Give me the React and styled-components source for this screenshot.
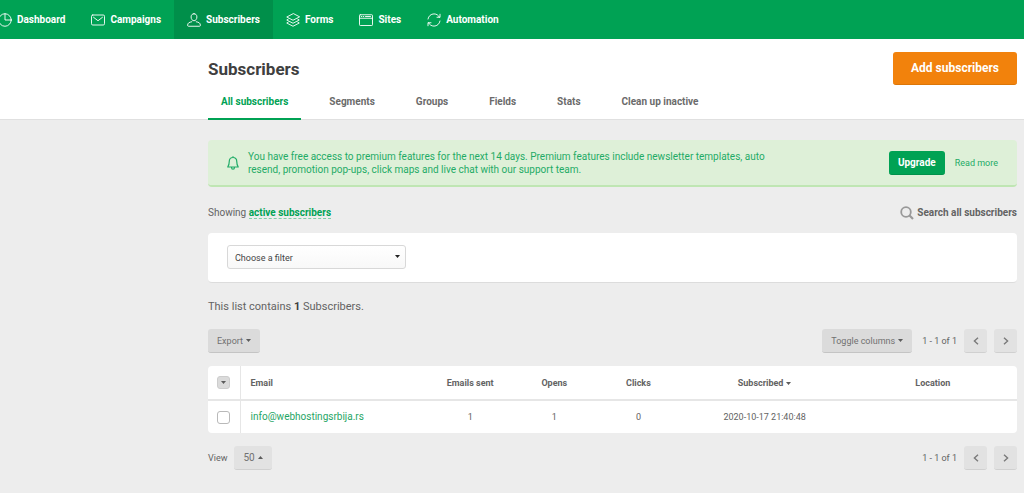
import React from 'react'
import styled, { createGlobalStyle } from 'styled-components'

const GlobalStyle = createGlobalStyle`
  * {
    box-sizing: border-box;
  }
  body {
    margin: 0;
    background: #ededed;
    color: #636363;
    font-family: Roboto, "Liberation Sans", sans-serif;
    font-size: 10px;
    line-height: 14px;
    overflow-x: hidden;
  }
  button, input, select {
    font-family: inherit;
    font-size: inherit;
    line-height: inherit;
    color: inherit;
    margin: 0;
  }
  a {
    text-decoration: none;
    color: inherit;
  }
`;

const Navbar = styled.nav`
  height: 39px;
  background: #00a254;
  overflow: hidden;
`;

const NavList = styled.ul`
  display: flex;
  list-style: none;
  height: 100%;
  margin: 0 0 0 -15px;
  padding: 0;
`;

const NavLink = styled.a`
  display: flex;
  align-items: center;
  gap: 5px;
  height: 100%;
  padding: 0 13px;
  background: ${(props) => (props.$active ? '#008f4a' : 'transparent')};
  color: white;
  font-weight: bold;
  white-space: nowrap;

  svg {
    width: 14px;
    height: 14px;
    flex: none;
  }
`;

const Header = styled.header`
  background: white;
  border-bottom: 1px solid #e0e0e0;
  padding: 13px 7px 0 208px;
`;

const TitleRow = styled.div`
  display: flex;
  align-items: center;
  justify-content: space-between;
`;

const Title = styled.h1`
  margin: 0;
  color: #3f3f3f;
  font-size: 17px;
  line-height: 22px;
  font-weight: bold;
`;

const AddButton = styled.button`
  height: 33px;
  padding: 0 18px;
  border: none;
  border-bottom: 1px solid #dc7608;
  border-radius: 3px;
  background: #f2820c;
  color: white;
  font-size: 12px;
  font-weight: bold;
  cursor: pointer;
`;

const Tabs = styled.div`
  display: flex;
  gap: 15px;
  margin-bottom: -1px;
`;

const Tab = styled.a`
  padding: 10px 13px 9px;
  border-bottom: 2px solid ${(props) => (props.$active ? '#00a254' : 'transparent')};
  color: ${(props) => (props.$active ? '#00a254' : '#6b6b6b')};
  font-weight: bold;
  white-space: nowrap;
`;

const Main = styled.main`
  padding: 20px 7px 22px 208px;
`;

const Notice = styled.div`
  display: flex;
  align-items: center;
  padding: 10px 19px 9px;
  border-bottom: 2px solid #bfe6b3;
  border-radius: 4px;
  background: #def0d8;
  color: #1fab66;
`;

const NoticeText = styled.p`
  flex: 1;
  max-width: 550px;
  margin: 0 auto 0 9px;
  line-height: 13px;
`;

const UpgradeButton = styled.button`
  height: 24px;
  margin-right: 10px;
  padding: 0 9px;
  border: none;
  border-bottom: 1px solid #00914b;
  border-radius: 3px;
  background: #00a254;
  color: white;
  font-weight: bold;
  cursor: pointer;
`;

const ReadMore = styled.a`
  font-size: 9px;
`;

const Bar = styled.div`
  display: flex;
  align-items: center;
  justify-content: space-between;
`;

const ShowingBar = styled(Bar)`
  margin: 19px 0 13px;
`;

const ActiveFilter = styled.a`
  border-bottom: 1px dashed #7fcfa6;
  color: #00a254;
  font-weight: bold;
`;

const SearchButton = styled.button`
  display: flex;
  align-items: center;
  gap: 3px;
  padding: 0;
  border: none;
  background: none;
  font-weight: bold;
  cursor: pointer;
`;

const FilterPanel = styled.div`
  padding: 12px 19px 13px;
  border-bottom: 1px solid #dcdcdc;
  border-radius: 4px;
  background: white;
`;

const SelectBox = styled.div`
  position: relative;
  width: 179px;

  svg {
    position: absolute;
    right: 6px;
    top: 10px;
    pointer-events: none;
  }
`;

const Select = styled.select`
  display: block;
  width: 100%;
  height: 24px;
  padding: 2px 20px 0 7px;
  border: 1px solid #d8d8d8;
  border-radius: 3px;
  background: linear-gradient(#ffffff, #f8f8f8);
  color: #444;
  font-size: 9px;
  appearance: none;
`;

const Summary = styled.p`
  margin: 17px 0 15px;
  font-size: 11px;

  strong {
    color: #3f3f3f;
    font-weight: bold;
  }
`;

const GreyButton = styled.button`
  display: flex;
  align-items: center;
  justify-content: center;
  gap: 3px;
  height: 24px;
  min-width: 23px;
  padding: ${(props) => (props.$square ? '0' : '0 9px')};
  border: none;
  border-bottom: 1px solid ${(props) => (props.$light ? '#d0d0d0' : '#c4c4c4')};
  border-radius: 3px;
  background: ${(props) => (props.$light ? '#e2e2e2' : '#dbdbdb')};
  color: #717171;
  font-size: ${(props) => (props.$light ? '10px' : '9px')};
  cursor: pointer;
`;

const Pager = styled.div`
  display: flex;
  align-items: center;
  gap: 7px;
  font-size: 9px;

  ${GreyButton} + span {
    margin-left: 3px;
  }
`;

const TableCard = styled.div`
  margin: 13px 0;
  border-radius: 4px;
  background: white;
`;

const Table = styled.table`
  width: 100%;
  table-layout: fixed;
  border-collapse: collapse;
`;

const Cell = styled.td`
  height: 33px;
  padding: 0 ${(props) => (props.$left ? '10px' : '0')};
  text-align: ${(props) => (props.$left ? 'left' : 'center')};
  font-weight: normal;
  font-size: 9px;
  white-space: nowrap;

  &:first-child {
    border-right: 1px solid #e6e6e6;
  }
`;

const HeadCell = styled(Cell)`
  height: 34px;
  border-bottom: 2px solid #e6e6e6;
  font-weight: bold;

  > svg {
    margin: 0 0 1px 3px;
  }
`;

const EmailLink = styled.a`
  color: #1fa565;
  font-size: 10px;
`;

const SelectAll = styled.button`
  display: flex;
  align-items: center;
  justify-content: center;
  width: 13px;
  height: 13px;
  margin: 0 auto;
  padding: 0;
  border: 1px solid #cdcdcd;
  border-radius: 3px;
  background: #dbdbdb;
`;

const Checkbox = styled.input`
  display: block;
  width: 13px;
  height: 13px;
  margin: 0 auto;
  border: 1px solid #b9b9b9;
  border-radius: 3px;
  background: white;
  appearance: none;
`;

const View = styled.div`
  display: flex;
  align-items: center;
  gap: 7px;
  font-size: 9px;
`;

const Icon = ({ children }) => (
    <svg viewBox="0 0 28 28" fill="none" stroke="white" strokeWidth="1.8" strokeLinejoin="round" strokeLinecap="round" aria-hidden="true">
        {children}
    </svg>
)

const Caret = ({ up, color = '#5c5c5c' }) => (
    <svg width="5" height="3" viewBox="0 0 5 3" aria-hidden="true">
        <path d={up ? 'M0 3h5L2.5 0z' : 'M0 0h5L2.5 3z'} fill={color} />
    </svg>
)

const Chevron = ({ next }) => (
    <svg width="6" height="8" viewBox="0 0 6 8" fill="none" stroke="#7a7a7a" strokeWidth="1.4" aria-hidden="true">
        <path d={next ? 'M1 .7L4.6 4 1 7.3' : 'M5 .7L1.4 4 5 7.3'} />
    </svg>
)

const navItems = [
    {
        label: 'Dashboard',
        icon: <><circle cx="14" cy="14" r="12.5" /><path d="M14 1.5V14h12.5" /></>,
    },
    {
        label: 'Campaigns',
        icon: <><rect x="1" y="4" width="26" height="20" rx="2.5" /><path d="M5 8.5l9 7 9-7" /></>,
    },
    {
        label: 'Subscribers',
        active: true,
        icon: <><path d="M14 1.5c-3.8 0-5.8 2.6-5.8 6.4 0 4.4 2.4 7.6 5.8 7.6s5.8-3.2 5.8-7.6c0-3.8-2-6.4-5.8-6.4z" /><path d="M9.5 17.5C4 18.5 1.5 20 1.2 24.5c0 1.3.6 2 1.8 2h22c1.2 0 1.8-.7 1.8-2-.3-4.5-2.8-6-8.3-7" /></>,
    },
    {
        label: 'Forms',
        icon: <><path d="M14 1.5L1.5 8 14 14.5 26.5 8z" /><path d="M4.5 12.3L1.5 14 14 20.5 26.5 14l-3-1.7" /><path d="M4.5 18.3L1.5 20 14 26.5 26.5 20l-3-1.7" /></>,
    },
    {
        label: 'Sites',
        icon: <><rect x="1" y="3.5" width="26" height="21.5" rx="1.5" /><path d="M1 10.5h26M4.5 7h1M8.5 7h1M13 7h10" /></>,
    },
    {
        label: 'Automation',
        icon: <><path d="M2 12C3 6 8 1.8 14 1.8c5 0 9 2.7 11 6.7M26 16c-1 6-6 10.2-12 10.2-5 0-9-2.7-11-6.7" /><path d="M26 2.5v6h-6M2 25.5v-6h6" /></>,
    },
]

const tabs = ['All subscribers', 'Segments', 'Groups', 'Fields', 'Stats', 'Clean up inactive']

const Pagination = ({ children }) => (
    <Pager>
        {children}
        <span>1 - 1 of 1</span>
        <GreyButton $light $square aria-label="Previous page"><Chevron /></GreyButton>
        <GreyButton $light $square aria-label="Next page"><Chevron next /></GreyButton>
    </Pager>
)

const SubscribersTable = () => (
    <TableCard>
        <Table>
            <colgroup>
                <col style={{ width: 32 }} />
                <col />
                <col style={{ width: '10.4%' }} />
                <col style={{ width: '10.4%' }} />
                <col style={{ width: '10.4%' }} />
                <col style={{ width: '20.8%' }} />
                <col style={{ width: '20.8%' }} />
            </colgroup>
            <thead>
                <tr>
                    <HeadCell as="th"><SelectAll aria-label="Select subscribers"><Caret /></SelectAll></HeadCell>
                    <HeadCell as="th" $left>Email</HeadCell>
                    <HeadCell as="th">Emails sent</HeadCell>
                    <HeadCell as="th">Opens</HeadCell>
                    <HeadCell as="th">Clicks</HeadCell>
                    <HeadCell as="th">Subscribed<Caret /></HeadCell>
                    <HeadCell as="th">Location</HeadCell>
                </tr>
            </thead>
            <tbody>
                <tr>
                    <Cell><Checkbox type="checkbox" aria-label="Select info@webhostingsrbija.rs" /></Cell>
                    <Cell $left><EmailLink href="#subscriber">info@webhostingsrbija.rs</EmailLink></Cell>
                    <Cell>1</Cell>
                    <Cell>1</Cell>
                    <Cell>0</Cell>
                    <Cell>2020-10-17 21:40:48</Cell>
                    <Cell></Cell>
                </tr>
            </tbody>
        </Table>
    </TableCard>
)

const App = () => {
    return (
        <>
            <GlobalStyle />
            <Navbar>
                <NavList>
                    {navItems.map((item) => (
                        <li key={item.label}>
                            <NavLink href={`#${item.label.toLowerCase()}`} $active={item.active}>
                                <Icon>{item.icon}</Icon>
                                {item.label}
                            </NavLink>
                        </li>
                    ))}
                </NavList>
            </Navbar>
            <Header>
                <TitleRow>
                    <Title>Subscribers</Title>
                    <AddButton>Add subscribers</AddButton>
                </TitleRow>
                <Tabs>
                    {tabs.map((tab, i) => (
                        <Tab key={tab} href="#tab" $active={i === 0}>{tab}</Tab>
                    ))}
                </Tabs>
            </Header>
            <Main>
                <Notice>
                    <svg width="12" height="14" viewBox="0 0 24 28" fill="none" stroke="#1fab66" strokeWidth="2.4" strokeLinejoin="round" aria-hidden="true">
                        <path d="M12 3c-5 0-7.5 3.5-7.5 8 0 6-1 8-3 11h21c-2-3-3-5-3-11 0-4.5-2.5-8-7.5-8zM12 3V.5M9 22.5c0 2.5 1 4 3 4s3-1.5 3-4" />
                    </svg>
                    <NoticeText>
                        You have free access to premium features for the next 14 days. Premium features include newsletter templates, auto resend, promotion pop-ups, click maps and live chat with our support team.
                    </NoticeText>
                    <UpgradeButton>Upgrade</UpgradeButton>
                    <ReadMore href="#more">Read more</ReadMore>
                </Notice>
                <ShowingBar>
                    <span>Showing <ActiveFilter href="#active">active subscribers</ActiveFilter></span>
                    <SearchButton>
                        <svg width="14" height="14" viewBox="0 0 14 14" fill="none" stroke="#999" strokeWidth="1.8" aria-hidden="true">
                            <circle cx="6" cy="6" r="4.8" />
                            <path d="M9.3 9.3l3.7 3.7" strokeWidth="2.2" />
                        </svg>
                        Search all subscribers
                    </SearchButton>
                </ShowingBar>
                <FilterPanel>
                    <SelectBox>
                        <Select aria-label="Filter" defaultValue="">
                            <option value="">Choose a filter</option>
                        </Select>
                        <Caret color="#222" />
                    </SelectBox>
                </FilterPanel>
                <Summary>This list contains <strong>1</strong> Subscribers.</Summary>
                <Bar>
                    <GreyButton>Export <Caret /></GreyButton>
                    <Pagination>
                        <GreyButton>Toggle columns <Caret /></GreyButton>
                    </Pagination>
                </Bar>
                <SubscribersTable />
                <Bar>
                    <View>
                        <span>View</span>
                        <GreyButton $light>50 <Caret up /></GreyButton>
                    </View>
                    <Pagination />
                </Bar>
            </Main>
        </>
    )
}

export default App
